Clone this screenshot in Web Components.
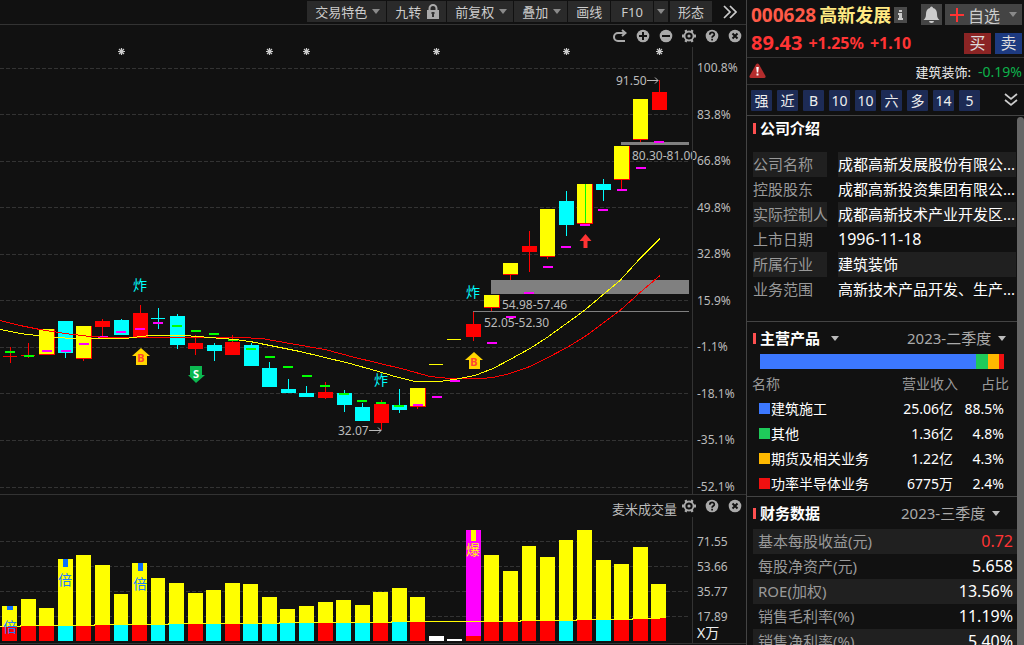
<!DOCTYPE html>
<html lang="zh-CN">
<head>
<meta charset="utf-8">
<title>高新发展 000628</title>
<style>
html,body{margin:0;height:100%}
body{background:#111;color:#ccc;font-family:"Noto Sans","Noto Sans CJK SC",sans-serif;font-size:15px;overflow:hidden}
</style>
</head>
<body>
<stock-app></stock-app>
<script>
const RESET = `*{box-sizing:border-box}button,select{font:inherit;color:inherit;border:0;padding:0;margin:0;background:none;border-radius:0;outline:0}h2{margin:0}table{border-collapse:collapse;width:100%}th{font-weight:normal}th,td{padding:0}svg{display:block}`;
function define(name, css, html) {
  customElements.define(name, class extends HTMLElement {
    constructor() {
      super();
      const root = this.attachShadow({ mode: 'open' });
      root.innerHTML = `<style>${RESET}${css}</style>` + (typeof html === 'function' ? html(this) : html);
    }
  });
}

/* ---------- icons ---------- */
const ICONS = {
  caret: [8, 5, '<path d="M0 0h8L4 5z" fill="#8a8a8a"/>'],
  caretlight: [8, 5, '<path d="M0 0h8L4 5z" fill="#bbb"/>'],
  lock: [14, 16, '<path d="M3.500 7V4.500a3.500 3.500 0 0 1 7 0V7" fill="none" stroke="#aaa" stroke-width="2"/><path d="M1 6h12v9H1z" fill="#aaa"/><path d="M5.500 8h3v2H8v3H6v-3h-.5z" fill="#333"/>'],
  more: [14, 14, '<path d="M1 1l6 6-6 6M7 1l6 6-6 6" fill="none" stroke="#ccc" stroke-width="1.700"/>'],
  down: [14, 14, '<path d="M1 1l6 5 6-5M1 7l6 5 6-5" fill="none" stroke="#ccc" stroke-width="1.700"/>'],
  redo: [14, 14, '<path d="M12 4H5a3.500 3.500 0 0 0 0 8h7M9 1l3.500 3L9 7" fill="none" stroke="#aaa" stroke-width="2"/>'],
  plus: [14, 14, '<circle cx="7" cy="7" r="6.300" fill="#aaa"/><path d="M3 7h8M7 3v8" stroke="#111" stroke-width="2"/>'],
  minus: [14, 14, '<circle cx="7" cy="7" r="6.300" fill="#aaa"/><path d="M3 7h8" stroke="#111" stroke-width="2"/>'],
  gear: [14, 14, '<circle cx="7" cy="7" r="4.500" fill="none" stroke="#aaa" stroke-width="1.800"/><g fill="#aaa"><path d="M0 5.500h3v3H0zM11 5.500h3v3h-3z"/><path d="M2.500 1.500l2-1 1.500 2.500-2.500 1.500zM11.500 1.500l-2-1L8 3l2.500 1.500zM2.500 12.500l2 1L6 11 3.500 9.500zM11.500 12.500l-2 1L8 11l2.500-1.500z"/><circle cx="7" cy="7" r="1.600"/></g>'],
  help: [14, 14, '<circle cx="7" cy="7" r="6.300" fill="#aaa"/><path d="M4.800 5.800c0-3.300 4.600-3 4.500-.3 0 1.600-2.200 1.500-2.200 3.200M7.100 9.800v1.700" fill="none" stroke="#111" stroke-width="1.700"/>'],
  close: [14, 14, '<circle cx="7" cy="7" r="6.300" fill="#aaa"/><path d="M4.500 4.500l5 5M9.500 4.500l-5 5" stroke="#111" stroke-width="2"/>'],
  info: [13, 16, '<path d="M0 0h13v16H0z" fill="#4a4a4a"/><path d="M5 3h3v2H5zM4 6h4v5h1v2H4v-2h1V8H4z" fill="#ccc"/>'],
  bell: [17, 18, '<path d="M7 2a1.500 1.500 0 0 1 3 0c3 .8 4 3 4 6 0 3.500 1 4.500 2.500 6H.5C2 12.500 3 11.500 3 8c0-3 1-5.200 4-6z" fill="#ccc"/><path d="M6 15h5a2.500 2 0 0 1-5 0z" fill="#ccc"/>'],
  add: [14, 14, '<path d="M0 7h14M7 0v14" stroke="#f33" stroke-width="2"/>'],
  warn: [17, 16, '<path d="M7 1.500Q8.500-.5 10 1.500L16.500 13q.5 2-1.500 2H2q-2 0-1.500-2z" fill="#b32d2d"/><path d="M7.200 4h2.600l-.6 5.500H7.800zM7.500 10.500h2v2h-2z" fill="#fff"/>']
};
define('ui-icon', ':host{display:inline-block;flex:none}', el => {
  const [w, h, body] = ICONS[el.getAttribute('name')];
  return `<svg width="${w}" height="${h}" viewBox="0 0 ${w} ${h}" aria-hidden="true">${body}</svg>`;
});

/* ---------- toolbar ---------- */
define('tool-bar', `:host{display:flex;justify-content:flex-end;gap:1px;height:25px;padding:1px 9px 2px 0;border-bottom:1px solid #333;font-size:13px}
button{display:flex;align-items:center;gap:5px;height:21px;padding:0 6px 0 8px;background:#2a2a2a;color:#ccc;white-space:nowrap}
.plain{padding:0 8px}.f{padding:0 10px}.slim{padding:0 3px;margin-right:1px}.more{background:none;padding:0 0 0 10px}`,
`<button>交易特色<ui-icon name="caret"></ui-icon></button><button>九转<ui-icon name="lock"></ui-icon></button><button>前复权<ui-icon name="caret"></ui-icon></button><button>叠加<ui-icon name="caret"></ui-icon></button><button class="plain">画线</button><button class="f">F10</button><button class="slim" aria-label="F10菜单"><ui-icon name="caret"></ui-icon></button><button class="plain">形态</button><button class="more" aria-label="更多"><ui-icon name="more"></ui-icon></button>`);

/* ---------- frame shared by both charts ---------- */
define('chart-frame', `:host{display:block;border-bottom:1px solid #333}
header{display:flex;justify-content:flex-end;align-items:center;height:22px;padding:4px 4px 0 0;font-size:13px}
.body{display:grid;grid-template-columns:minmax(0,1fr) 54px}
.axis{border-left:1px solid #333;font-size:12px;color:#bbb;display:flex;flex-direction:column}`,
`<header><slot name="tools"></slot></header><div class="body"><slot></slot><div class="axis"><slot name="axis"></slot></div></div>`);
const tool = (n, label) => `<button aria-label="${label}"><ui-icon name="${n}"></ui-icon></button>`;
const CHART = `:host{display:block}svg.plot{width:100%;height:auto;font-size:12px;overflow:visible}.tools{display:flex;align-items:center;gap:9px;color:#bbb}.tools span{margin-right:-4px}.scale{display:flex;flex-direction:column;flex:1}.scale span{display:block;padding-left:4px}`;
const rect = (x, y, w, h, c) => `<rect x="${x}" y="${y}" width="${w}" height="${h}" fill="${c}"/>`;
const grid = ys => ys.map(y => `<path d="M0 ${y}.5H688" stroke="#333" stroke-dasharray="4 2"/>`).join('');
const Y = '#ff0', R = '#f00', C = '#0ff', M = '#f0f', G = '#0f0';

/* candle: left, body top, body bottom, wick top, wick bottom, colour, red right edge */
const candles = [
 [3,356,357,347,363,R],[21,355,356,343,358,R],[39,329,354,329,355,Y,1],[58,321,353,321,358,C],[76,326,358,326,361,Y,1],[95,321,327,319,336,R],
 [114,320,335,319,335,C],[133,313,338,305,338,R],[151,318,319,308,329,C],[170,316,345,314,349,C],[188,343,349,335,355,R],[207,345,351,343,361,C],
 [225,342,355,335,355,R],[244,345,366,343,366,C],[262,368,387,362,387,C],[281,389,393,379,393,C],[299,393,397,386,397,C],[318,392,398,382,399,R],
 [337,393,405,390,412,C],[355,407,421,403,421,C],[374,404,423,400,430,R],[392,405,410,389,413,C],[410,388,406,388,409,Y,1],[429,364,365,364,365,Y],
 [447,339,340,339,340,Y],[466,324,337,312,341,R],[484,295,307,295,311,Y,1],[503,263,274,263,280,Y],[522,246,252,231,272,R],[540,209,256,209,259,Y],
 [559,201,225,191,236,C],[577,184,223,184,224,Y,1],[596,184,190,179,201,C],[614,146,179,146,189,Y,1],[633,99,139,99,142,Y],[652,92,110,80,110,R]];
const dashes = [[5,351,G],[24,355,G],[42,350,M],[61,350,M],[79,343,M],[98,336,M],[116,331,M],[135,328,M],[153,322,M],[172,325,G],[191,330,G],[209,333,G],[228,339,G],
 [246,348,G],[265,356,G],[283,366,G],[302,375,G],[320,385,G],[339,393,G],[357,400,G],[376,402,G],[394,405,G],[413,404,M],[432,396,M],[450,380,M],[487,342,M],
 [506,316,M],[524,292,M],[543,266,M],[561,246,M],[580,224,M],[598,209,M],[617,189,M],[636,167,M],[654,141,M]];
const drawCandle = ([x, t, b, wt, wb, c, edge]) => {
  const flat = b - t === 1, yellow = c === Y && !flat;
  return rect(x + 7, wt, 1, wb - wt, yellow ? R : c) + rect(x, t, flat ? 14 : 15, b - t, c)
    + (yellow ? rect(x, b, 15, 1, R) : '') + (edge ? rect(x + 15, t, 1, b - t + 1, R) : '');
};
const star = x => `<path d="M${x}.5 48v7M${x - 3} 51.500h7M${x - 2} 49l5 5M${x + 3} 49l-5 5" stroke="#ccc" stroke-width="1.200"/>`;
const buy = (x, y) => `<path d="M${x} ${y}l9 8h-3v9h-11v-9h-4z" fill="#ffd500"/><text x="${x}" y="${y + 14}" text-anchor="middle" font-size="11" font-weight="bold" fill="#f43">B</text>`;
define('candle-chart', CHART + '.scale{padding-top:14px;justify-content:space-between}.scale span{line-height:14px}', `<chart-frame>
<div class="tools" slot="tools">${tool('redo','重做')}${tool('plus','放大')}${tool('minus','缩小')}${tool('gear','设置')}${tool('help','帮助')}${tool('close','关闭')}</div>
<svg class="plot" viewBox="0 47 692 447" role="img" aria-label="日K线图">
<g shape-rendering="crispEdges">${grid([68,114,161,207,254,300,347,393,440,487])}${rect(621,142,68,3,'#808080')}${rect(491,280,198,14,'#808080')}${rect(473,311,216,1,'#808080')}
${candles.map(drawCandle).join('')}${rect(585,184,1,39,G)}${dashes.map(([x, y, c]) => rect(x, y, 10, 2, c)).join('')}
<g fill="none"><path stroke="${R}" d="M0 320.500L20 325.500 40 329.500 65 333.500 90 336.500 110 337.500H240L262 338.500 290 343.500 325 349.500 355 357.500 380 363.500 405 369.500 430 376.500 450 378.500H482L493 377.500 510 373.500 530 366.500 548 357.500 567 347.500 585 336.500 620 310.500 640 292.500 660 275.500"/>
<path stroke="${Y}" d="M0 329.500L20 333.500 55 337.500 75 338.500H125L150 335.500H185L210 337.500 235 339.500 250 341.500 270 345.500 300 351.500 325 357.500 350 363.500 375 370.500 395 376.500 415 381.500H440L460 378.500 475 375.500 493 368.500 510 359.500 530 348.500 547 337.500 565 324.500 583 311.500 620 280.500 640 258.500 660 238.500"/></g></g>
${[121,269,306,436,566,659].map(star).join('')}
<g fill="${C}" font-size="14" text-anchor="middle"><text x="140" y="290">炸</text><text x="473" y="297">炸</text><text x="381" y="385">炸</text></g>
<g fill="#bbb"><text x="616" y="85">91.50</text><text x="338" y="435">32.07</text><text x="632" y="160">80.30-81.00</text><text x="502" y="309">54.98-57.46</text><text x="484" y="327">52.05-52.30</text></g>
<g stroke="#bbb" fill="none"><path d="M647 80.500h11m-3-3l3 3-3 3M369 430.500h12m-3-3l3 3-3 3"/></g>
${buy(141,348)}${buy(474,352)}
<path d="M190 366h12v9h3l-9 8-8-8h2z" fill="#0cb850"/><text x="196" y="378" text-anchor="middle" font-size="11" font-weight="bold" fill="#fff">S</text>
<path d="M585.500 234l6 7h-4v7h-4v-7h-4z" fill="#f33"/></svg>
<div class="scale" slot="axis">${['100.8%','83.8%','66.8%','49.8%','32.8%','15.9%','-1.1%','-18.1%','-35.1%','-52.1%'].map(t => `<span>${t}</span>`).join('')}</div>
</chart-frame>`);

/* volume: left, top, base top, base colour */
const volumes = [[2,606,626,R],[21,599,626,R],[39,608,626,R],[58,559,626,C],[76,555,626,R],[95,565,625,R],[114,594,625,C],[132,563,625,R],[151,578,625,C],[169,583,624,C],
 [188,593,624,R],[206,590,624,C],[225,583,624,R],[243,584,624,C],[262,597,624,C],[280,609,623,C],[299,606,623,C],[318,602,623,R],[336,600,623,C],[355,605,623,C],
 [373,592,623,R],[392,588,622,C],[410,597,622,R],[484,555,622,R],[503,571,622,R],[522,546,621,R],[540,557,621,R],[559,540,621,C],[577,530,620,R],[596,560,620,C],
 [614,564,620,R],[633,547,619,R],[651,584,618,R]];
define('volume-chart', CHART + '.scale{padding-top:17px;gap:9px;flex:none}.scale span,.unit{line-height:16px}.unit{padding-left:4px;font-size:14px;color:#eee}', `<chart-frame>
<div class="tools" slot="tools"><span>麦米成交量</span>${tool('gear','设置')}${tool('help','帮助')}${tool('close','关闭')}</div>
<svg class="plot" viewBox="0 517 692 126" role="img" aria-label="成交量图"><g shape-rendering="crispEdges">${grid([541,566,591,616])}
${volumes.map(([x, t, s, c]) => { const w = [114,151,522,559].includes(x) ? 14 : 15; return rect(x, t, w, s - t, Y) + rect(x, s, w, 641 - s, c); }).join('')}
${rect(429,636,15,5,'#fff')}${rect(447,639,15,2,'#fff')}${rect(466,530,15,106,M)}${rect(466,636,15,5,R)}${rect(471,530,5,11,Y)}
<path fill="none" stroke="${Y}" d="M0 626.500H20V625.500H94V624.500H168V623.500H279V622.500H391V621.500H520V620.500H576V619.500H632V618.500H660"/>
${rect(7,606,6,4,'#0d6efd')}${rect(63,559,5,8,'#0d6efd')}${rect(138,563,5,8,'#0d6efd')}</g>
<g font-size="14" text-anchor="middle" fill="#1a7cff"><text x="10" y="632">倍</text><text x="65" y="585">倍</text><text x="140" y="589">倍</text><text x="473" y="555" fill="${Y}">爆</text></g></svg>
<div class="scale" slot="axis"><span>71.55</span><span>53.66</span><span>35.77</span><span>17.89</span></div><div class="unit" slot="axis">X万</div>
</chart-frame>`);

/* ---------- quote header ---------- */
define('quote-header', `:host{display:block}
.row{display:flex;align-items:center;padding:0 2px 0 4px;white-space:nowrap}
.name{height:29px;gap:3px;font-weight:bold}.code{font-size:19px;color:#ff5a48;line-height:24px}.title{font-size:18px;color:#ffe982;line-height:24px}
.push{margin-left:auto}.name button{height:21px;background:#444;font-weight:normal;display:flex;align-items:center;justify-content:center}
.bell{width:21px}.fav{width:77px;gap:4px;color:#ccc;font-size:16px}.fav ui-icon:last-child{margin-left:5px}
.price{height:28px;font-weight:bold;font-size:16px;color:#ff3434;gap:6px;border-bottom:1px solid #333;box-sizing:content-box}
.last{font-size:20px}.price span{line-height:26px}.price button{width:27px;height:21px;color:#ddd;font-weight:normal;line-height:20px}.b{background:#8b2424}.s{background:#1d3a80}.s.s{margin-left:-2px}
.sector{height:26px;padding-left:2px;border-bottom:1px solid #333;box-sizing:content-box;gap:7px;font-size:13px;color:#eee}.sector em{font-style:normal;font-size:14px;color:#0db14b}
.tags{height:30px;gap:5px;font-size:14px;border-bottom:1px solid #444;box-sizing:content-box;padding-right:6px}.tags button{width:21px;height:21px;background:#1d2b55;color:#eee;line-height:21px;border-radius:1px}.tags .push{background:none;width:14px;display:flex;align-items:center}`,
`<div class="row name"><span class="code">000628</span><span class="title">高新发展</span><ui-icon name="info"></ui-icon><button class="bell push" aria-label="提醒"><ui-icon name="bell"></ui-icon></button><button class="fav"><ui-icon name="add"></ui-icon>自选<ui-icon name="caret"></ui-icon></button></div>
<div class="row price"><span class="last">89.43</span><span>+1.25%</span><span>+1.10</span><button class="b push">买</button><button class="s">卖</button></div>
<div class="row sector"><ui-icon name="warn"></ui-icon><span class="push">建筑装饰:</span><em>-0.19%</em></div>
<div class="row tags">${['强','近','B','10','10','六','多','14','5'].map(t => `<button>${t}</button>`).join('')}<button class="push" aria-label="展开"><ui-icon name="down"></ui-icon></button></div>`);

/* ---------- info sections ---------- */
define('info-section', `:host{display:block;border-bottom:1px solid #444}
header{display:flex;align-items:center;height:var(--head,32px);padding:0 11px 0 6px;white-space:nowrap}
header::before{content:"";width:3px;height:11px;margin-right:4px;background:#ff5050}::slotted(h2){margin:0;font-size:15px;line-height:20px;color:#fff}`,
`<header><slot name="head"></slot></header><slot></slot>`);
const PICK = `select{appearance:none;font-size:15px;color:#aaa;line-height:20px}.pick{display:flex;align-items:center;gap:6px;margin-left:auto}`;
define('company-intro', `:host{display:block}info-section{--head:24px}dl{display:grid;grid-template-columns:74px minmax(0,1fr);column-gap:11px;margin:12px 1px 19px 6px;line-height:25px}
dt,dd{margin:0;height:25px;white-space:nowrap}dt{color:#999}dd{color:#fff}.odd{background:#202020}.date{font-size:16px}`,
`<info-section><h2 slot="head">公司介绍</h2><dl>${[['公司名称','成都高新发展股份有限公...'],['控股股东','成都高新投资集团有限公...'],['实际控制人','成都高新技术产业开发区...'],['上市日期','1996-11-18'],['所属行业','建筑装饰'],['业务范围','高新技术产品开发、生产...']]
 .map(([k, v], i) => `<dt class="${i % 2 ? '' : 'odd'}">${k}</dt><dd class="${i % 2 ? '' : 'odd'} ${i === 3 ? 'date' : ''}">${v}</dd>`).join('')}</dl></info-section>`);
define('main-products', PICK + `:host{display:block}.kind{font-weight:bold;color:#fff}.pick.first{margin:0;gap:10px}
.bar{display:flex;height:15px;margin:0 13px 2px 13px}.bar i{display:block}
table{font-size:14px;line-height:25px;color:#fff;table-layout:fixed}thead{color:#999}th{text-align:right}th:first-child{text-align:left;padding-left:5px}td:first-child{padding-left:12px}
td{text-align:right}td:first-child{text-align:left;white-space:nowrap}td:nth-child(2){padding-right:5px}td:nth-child(3){padding-right:13px}th:nth-child(3){padding-right:8px}
.name{display:flex;align-items:center;gap:1px}.name i{width:11px;height:11px}`,
`<info-section><div slot="head" class="pick first"><select class="kind" aria-label="分类"><option>主营产品</option></select><ui-icon name="caretlight"></ui-icon></div>
<div slot="head" class="pick"><select aria-label="产品季度"><option>2023-二季度</option></select><ui-icon name="caretlight"></ui-icon></div>
<div class="bar"><i style="flex:216;background:#3c78ff"></i><i style="flex:12;background:#1fca5a"></i><i style="flex:11;background:#ffb900"></i><i style="flex:5;background:#f01010"></i></div>
<table><colgroup><col><col style="width:82px"><col style="width:59px"></colgroup><thead><tr><th>名称</th><th>营业收入</th><th>占比</th></tr></thead><tbody>
${[['#3c78ff','建筑施工','25.06亿','88.5%'],['#1fca5a','其他','1.36亿','4.8%'],['#ffb900','期货及相关业务','1.22亿','4.3%'],['#f01010','功率半导体业务','6775万','2.4%']]
 .map(([c, n, a, p]) => `<tr><td><span class="name"><i style="background:${c}"></i>${n}</span></td><td>${a}</td><td>${p}</td></tr>`).join('')}</tbody></table></info-section>`);
define('finance-data', PICK + `:host{display:block}.pick{padding-right:6px}table{margin-left:6px;width:calc(100% - 6px);line-height:25px}tr:nth-child(odd){background:#202020}th{text-align:left;color:#999;padding-left:5px}td{text-align:right;color:#fff;font-size:16px;padding-right:4px}tr{height:25px}.up{color:#ff3434}`,
`<info-section><h2 slot="head">财务数据</h2><div slot="head" class="pick"><select aria-label="财务季度"><option>2023-三季度</option></select><ui-icon name="caretlight"></ui-icon></div>
<table><tbody>${[['基本每股收益(元)','0.72'],['每股净资产(元)','5.658'],['ROE(加权)','13.56%'],['销售毛利率(%)','11.19%'],['销售净利率(%)','5.40%']]
 .map(([k, v], i) => `<tr><th scope="row">${k}</th><td class="${i ? '' : 'up'}">${v}</td></tr>`).join('')}</tbody></table></info-section>`);

/* ---------- page ---------- */
define('stock-app', `:host{display:grid;grid-template-columns:minmax(0,1fr) 278px;height:100vh;overflow:hidden}
main{min-width:0}aside{border-left:1px solid #444;display:flex;flex-direction:column;min-height:0}
.scroll{display:flex;flex:1;min-height:0;overflow:hidden}.sections{flex:1;min-width:0}.thumb{width:7px;margin-top:1px;border-radius:4px 4px 0 0;background:#666}`,
`<main><tool-bar></tool-bar><candle-chart></candle-chart><volume-chart></volume-chart></main>
<aside><quote-header></quote-header><div class="scroll"><div class="sections"><company-intro></company-intro><main-products></main-products><finance-data></finance-data></div><div class="thumb"></div></div></aside>`);
</script>
</body>
</html>
